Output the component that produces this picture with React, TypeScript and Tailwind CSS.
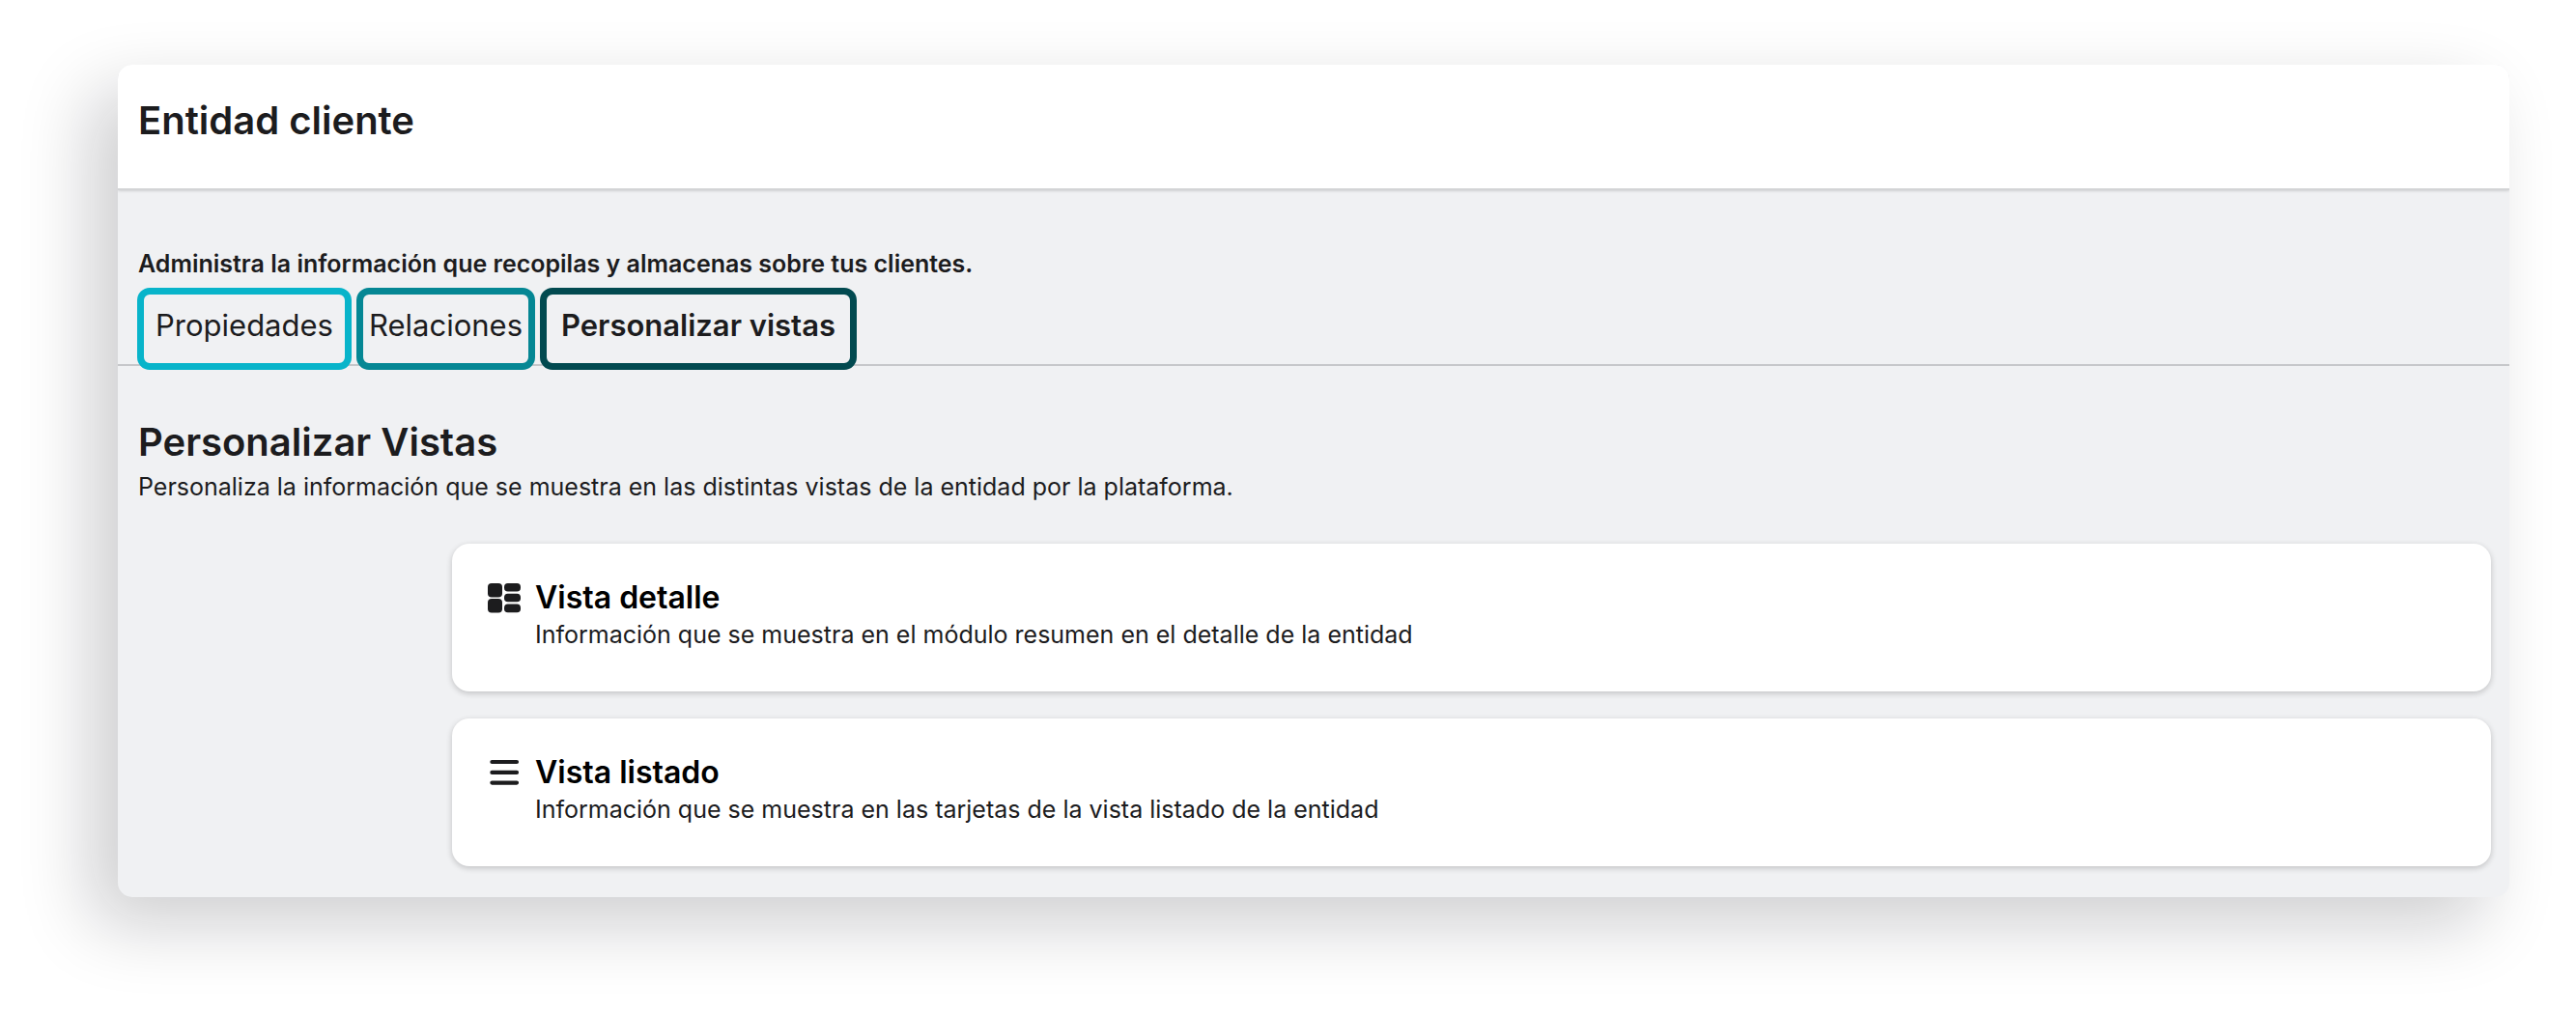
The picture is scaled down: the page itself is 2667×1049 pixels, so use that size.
import React, { useState } from "react";

const tabs = [
  { id: "propiedades", label: "Propiedades", className: "w-[222px] border-[#08b4ca]" },
  { id: "relaciones", label: "Relaciones", className: "w-[185px] border-[#058794]" },
  { id: "vistas", label: "Personalizar vistas", className: "w-[328px] border-[#024a50]" },
];

const DetailIcon = () => (
  <svg width="36" height="32" viewBox="0 0 36 32" fill="#1c1c1e" aria-hidden="true">
    <rect x="1" y="1" width="15" height="14.5" rx="4" />
    <rect x="1" y="17" width="15" height="14.5" rx="4" />
    <rect x="18" y="1" width="17" height="8.5" rx="3.8" />
    <rect x="18" y="11.8" width="17" height="8.5" rx="3.8" />
    <rect x="18" y="22.6" width="17" height="8.7" rx="3.8" />
  </svg>
);

const ListIcon = () => (
  <svg width="36" height="32" viewBox="0 0 36 32" stroke="#1c1c1e" strokeWidth="4.2" strokeLinecap="round" aria-hidden="true">
    <path d="M5.4 5H31M5.4 15.9H31M5.4 26.6H31" />
  </svg>
);

const views = [
  {
    title: "Vista detalle",
    description: "Información que se muestra en el módulo resumen en el detalle de la entidad",
    icon: <DetailIcon />,
  },
  {
    title: "Vista listado",
    description: "Información que se muestra en las tarjetas de la vista listado de la entidad",
    icon: <ListIcon />,
  },
];

const App: React.FC = () => {
  const [activeTab, setActiveTab] = useState("vistas");

  return (
    <div className="min-h-screen bg-white pt-[67px] pr-[69px] pb-[120px] pl-[122px] font-['Inter','Open_Sans',sans-serif] text-[#1c1c1e]">
      <main className="overflow-hidden rounded-[15px] bg-[#f0f1f3] shadow-[-28px_28px_75px_rgba(10,10,20,0.2)]">
        {/* Header */}
        <header className="border-b-2 border-[#d3d4d6] bg-white px-[21px] pt-[33px] pb-[45px] shadow-sm">
          <h1 className="text-[40px] leading-[50px] font-semibold">Entidad cliente</h1>
        </header>

        {/* Tabs */}
        <p className="mt-[58px] px-[21px] text-[25px] leading-[36px] font-semibold">
          Administra la información que recopilas y almacenas sobre tus clientes.
        </p>
        <div role="tablist" className="mt-[7px] flex gap-[5px] border-b-2 border-[#c6c7ca] px-5">
          {tabs.map((tab) => (
            <button
              key={tab.id}
              type="button"
              role="tab"
              aria-selected={activeTab === tab.id}
              onClick={() => setActiveTab(tab.id)}
              className={`-mb-1.5 h-[85px] rounded-[13px] border-[7px] pb-2 text-[31px] leading-[40px] whitespace-nowrap ${tab.className} ${
                activeTab === tab.id ? "font-semibold" : "font-normal"
              }`}
            >
              {tab.label}
            </button>
          ))}
        </div>

        {/* Views */}
        <section className="pt-[54px] pr-[19px] pb-8 pl-[21px]">
          <h2 className="text-[40px] leading-[50px] font-semibold">Personalizar Vistas</h2>
          <p className="mt-[3px] text-[25px] leading-[36px]">
            Personaliza la información que se muestra en las distintas vistas de la entidad por la plataforma.
          </p>
          <div className="mt-[41px] ml-[325px] flex flex-col gap-7">
            {views.map((view) => (
              <article
                key={view.title}
                className="flex gap-3.5 rounded-[18px] bg-white px-9 pt-9 pb-[41px] shadow-[0_2px_6px_rgba(0,0,0,0.2)]"
              >
                <div className="pt-1">{view.icon}</div>
                <div>
                  <h3 className="text-[32px] leading-[40px] font-semibold text-black">{view.title}</h3>
                  <p className="text-[25px] leading-[36px]">{view.description}</p>
                </div>
              </article>
            ))}
          </div>
        </section>
      </main>
    </div>
  );
};

export default App;
